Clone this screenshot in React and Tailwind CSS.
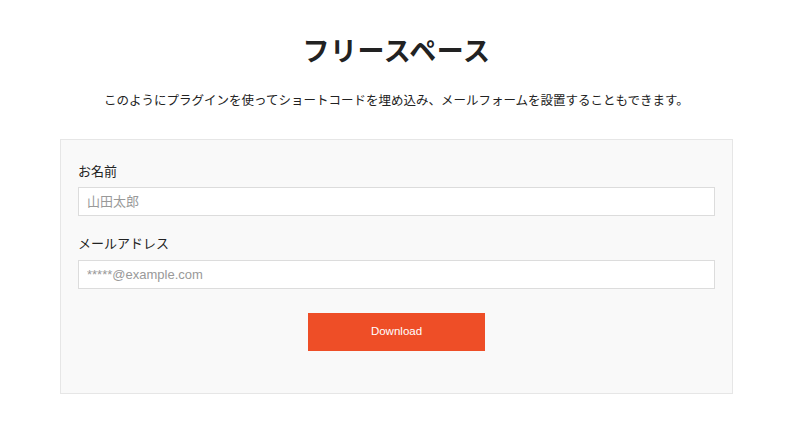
export default function App() {
  return (
    <div
      className="min-h-screen bg-white pl-[3px] text-[#222]"
      style={{ fontFamily: '"Liberation Sans", "Noto Sans CJK JP", sans-serif' }}
    >
      <div className="mx-auto w-[673px] pt-[34px]">
        <h1 className="text-center text-[27px] font-bold leading-[36px] tracking-[0.02em]">
          フリースペース
        </h1>
        <p className="mt-[21px] text-center text-[12.5px] leading-[20px]">
          このようにプラグインを使ってショートコードを埋め込み、メールフォームを設置することもできます。
        </p>

        <form className="mt-[28px] h-[255px] border border-[#e6e6e6] bg-[#f9f9f9] px-[17px] pt-[22px]">
          <label className="block text-[13px] leading-[20px]">お名前</label>
          <input
            type="text"
            placeholder="山田太郎"
            className="mt-[5px] block h-[29px] w-full border border-[#dcdcdc] bg-white px-[8px] text-[13px] placeholder:text-[#999] outline-none"
          />
          <label className="mt-[18px] block text-[13px] leading-[20px]">メールアドレス</label>
          <input
            type="email"
            placeholder="*****@example.com"
            className="mt-[6px] block h-[29px] w-full border border-[#dcdcdc] bg-white px-[8px] text-[13px] placeholder:text-[#999] outline-none"
          />
          <div className="mt-[24px] flex justify-center">
            <button
              type="button"
              className="h-[38px] w-[177px] bg-[#ee4e27] text-[11.5px] text-white"
            >
              Download
            </button>
          </div>
        </form>
      </div>
    </div>
  );
}
